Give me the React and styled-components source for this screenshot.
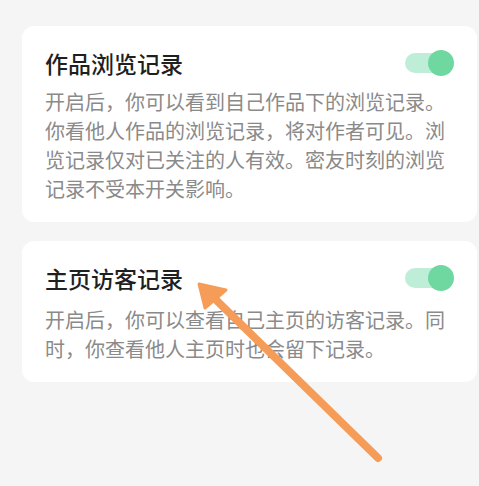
import React, { useState } from "react";
import styled, { createGlobalStyle } from "styled-components";

const GlobalStyle = createGlobalStyle`
  html, body {
    margin: 0;
    padding: 0;
    background: #f5f5f5;
  }
  body {
    font-family: "Noto Sans CJK SC", "Noto Sans", sans-serif;
  }
`;

const Page = styled.div`
  position: relative;
  width: 479px;
  height: 486px;
  overflow: hidden;
  background: #f5f5f5;
  padding: 26px 2px 0 22px;
  box-sizing: border-box;
  display: flex;
  flex-direction: column;
  gap: 19px;
`;

const Card = styled.div`
  background: #ffffff;
  border-radius: 12px;
  padding: 22px 28px 19px 23px;
  display: flex;
  flex-direction: column;
  gap: ${(p) => p.$gap || 10}px;
`;

const Head = styled.div`
  display: flex;
  align-items: center;
  justify-content: space-between;
  height: 30px;
`;

const Title = styled.div`
  font-size: 23px;
  line-height: 30px;
  font-weight: 500;
  color: #1f1f1f;
`;

const Desc = styled.p`
  margin: 0;
  width: 402px;
  font-size: 20px;
  line-height: 29px;
  color: #8a8a8a;
`;

const Track = styled.button`
  position: relative;
  width: 44px;
  height: 20px;
  border: none;
  padding: 0;
  border-radius: 10px;
  background: ${(p) => (p.$on ? "#bfeed8" : "#dddddd")};
  cursor: pointer;
  margin-right: 0;
`;

const Knob = styled.span`
  position: absolute;
  top: 50%;
  left: ${(p) => (p.$on ? "23px" : "-5px")};
  width: 26px;
  height: 26px;
  margin-top: -13px;
  border-radius: 50%;
  background: ${(p) => (p.$on ? "#6fd8a1" : "#ffffff")};
  transition: left 0.15s;
`;

const Overlay = styled.svg`
  position: absolute;
  left: 0;
  top: 0;
  pointer-events: none;
`;

function Toggle() {
  const [on, setOn] = useState(true);
  return (
    <Track $on={on} onClick={() => setOn(!on)}>
      <Knob $on={on} />
    </Track>
  );
}

const settings = [
  {
    title: "作品浏览记录",
    desc: "开启后，你可以看到自己作品下的浏览记录。你看他人作品的浏览记录，将对作者可见。浏览记录仅对已关注的人有效。密友时刻的浏览记录不受本开关影响。",
    gap: 9,
  },
  {
    title: "主页访客记录",
    desc: "开启后，你可以查看自己主页的访客记录。同时，你查看他人主页时也会留下记录。",
    gap: 12,
  },
];

export default function App() {
  return (
    <>
      <GlobalStyle />
      <Page>
        {settings.map((s) => (
          <Card key={s.title} $gap={s.gap}>
            <Head>
              <Title>{s.title}</Title>
              <Toggle />
            </Head>
            <Desc>{s.desc}</Desc>
          </Card>
        ))}
        <Overlay width="479" height="486" viewBox="0 0 479 486">
          <line
            x1="378"
            y1="458"
            x2="212"
            y2="296"
            stroke="#f59d58"
            strokeWidth="8"
            strokeLinecap="round"
          />
          <polygon
            points="199,284 226,290 205,308"
            fill="#f59d58"
            stroke="#f59d58"
            strokeWidth="3"
            strokeLinejoin="round"
          />
        </Overlay>
      </Page>
    </>
  );
}
